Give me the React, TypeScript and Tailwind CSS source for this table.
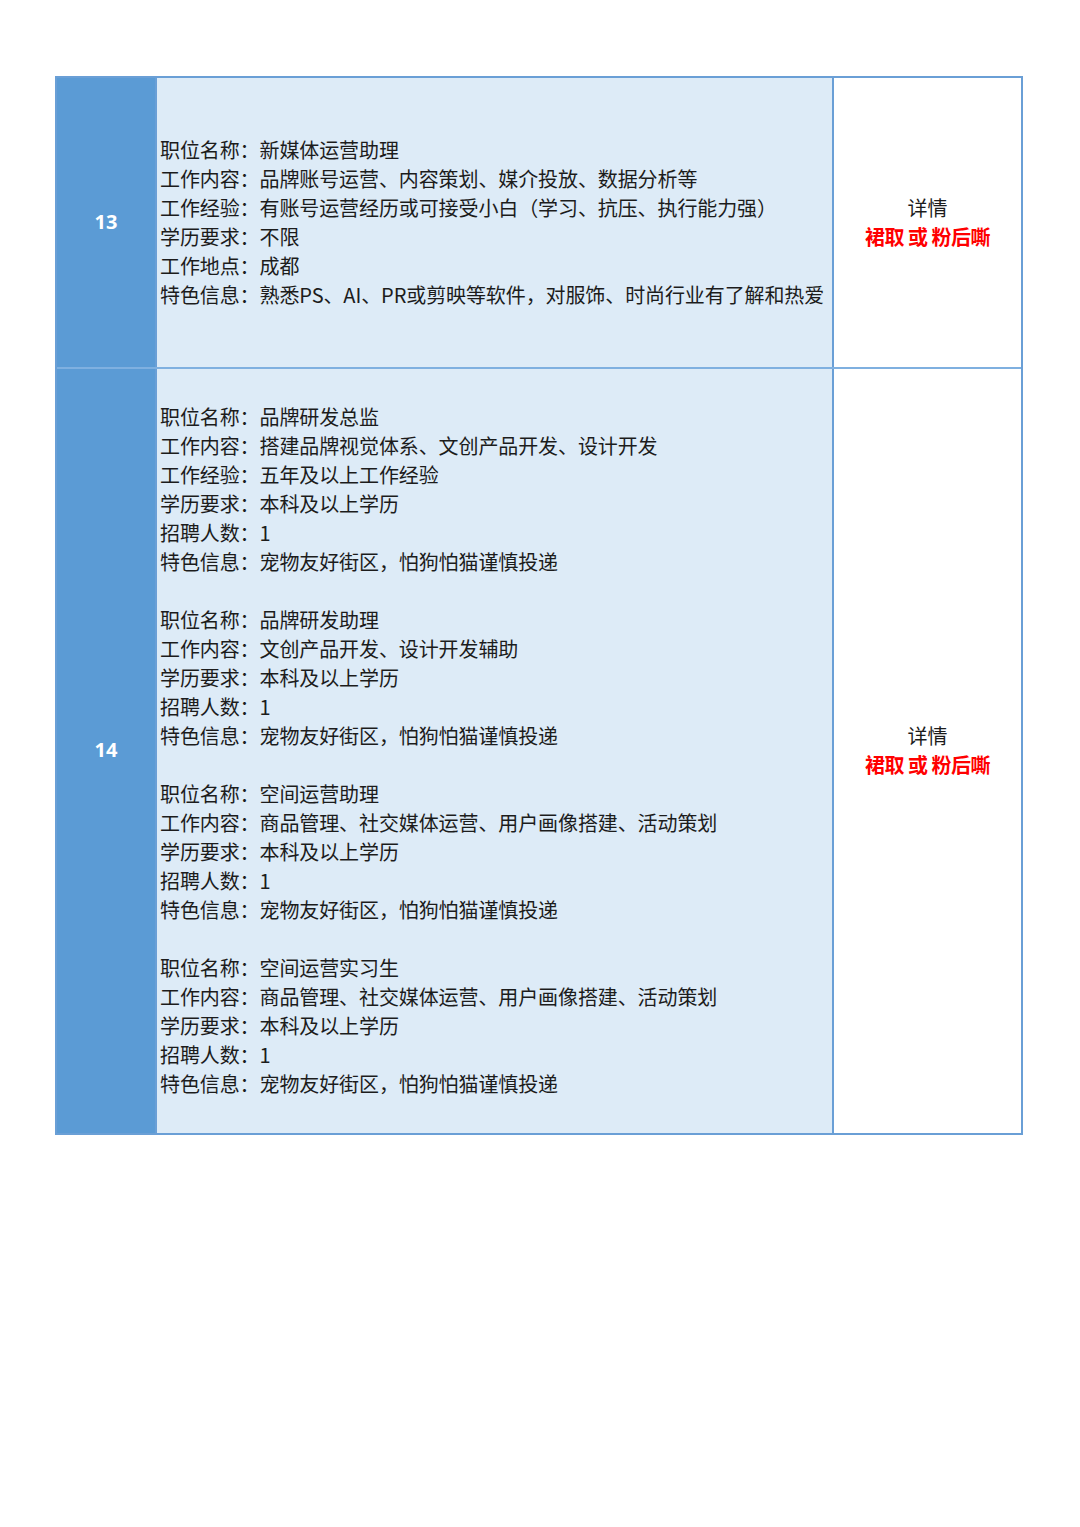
const rows = [
  {
    no: "13",
    blocks: [
      [
        "职位名称：新媒体运营助理",
        "工作内容：品牌账号运营、内容策划、媒介投放、数据分析等",
        "工作经验：有账号运营经历或可接受小白（学习、抗压、执行能力强）",
        "学历要求：不限",
        "工作地点：成都",
        "特色信息：熟悉PS、AI、PR或剪映等软件，对服饰、时尚行业有了解和热爱",
      ],
    ],
  },
  {
    no: "14",
    blocks: [
      [
        "职位名称：品牌研发总监",
        "工作内容：搭建品牌视觉体系、文创产品开发、设计开发",
        "工作经验：五年及以上工作经验",
        "学历要求：本科及以上学历",
        "招聘人数：1",
        "特色信息：宠物友好街区，怕狗怕猫谨慎投递",
      ],
      [
        "职位名称：品牌研发助理",
        "工作内容：文创产品开发、设计开发辅助",
        "学历要求：本科及以上学历",
        "招聘人数：1",
        "特色信息：宠物友好街区，怕狗怕猫谨慎投递",
      ],
      [
        "职位名称：空间运营助理",
        "工作内容：商品管理、社交媒体运营、用户画像搭建、活动策划",
        "学历要求：本科及以上学历",
        "招聘人数：1",
        "特色信息：宠物友好街区，怕狗怕猫谨慎投递",
      ],
      [
        "职位名称：空间运营实习生",
        "工作内容：商品管理、社交媒体运营、用户画像搭建、活动策划",
        "学历要求：本科及以上学历",
        "招聘人数：1",
        "特色信息：宠物友好街区，怕狗怕猫谨慎投递",
      ],
    ],
  },
];

const font = { fontFamily: '"Noto Sans CJK SC", "Noto Sans", sans-serif' };

export default function App() {
  return (
    <div className="w-[1080px] h-[1527px] bg-white pt-[76px] pl-[55px]" style={font}>
      <div className="w-[968px] border-2 border-[#6a9fd6]">
        {rows.map((row, i) => (
          <div
            key={row.no}
            className={`flex ${i > 0 ? "border-t-2 border-[#7fb0e0]" : ""}`}
          >
            <div className="w-[100px] shrink-0 bg-[#5b9bd5] flex items-center justify-center border-r-2 border-[#6a9fd6] pb-[2px]">
              <span
                className="text-white font-bold text-[20px]"
                style={{ fontFamily: '"Open Sans", "Liberation Sans", sans-serif' }}
              >
                {row.no}
              </span>
            </div>
            <div className="w-[677px] shrink-0 bg-[#ddebf7] border-r-2 border-[#6a9fd6] pl-[3px] flex flex-col justify-center gap-[29px] pt-[33px] pb-[35px] min-h-[289px]">
              {row.blocks.map((b, j) => (
                <div key={j} className="flex flex-col">
                  {b.map((line) => (
                    <div
                      key={line}
                      className="text-[20px] leading-[29px] text-[#1c1c1c] whitespace-nowrap tracking-[-0.1px]"
                    >
                      {line}
                    </div>
                  ))}
                </div>
              ))}
            </div>
            <div className="flex-1 flex flex-col items-center justify-center pb-[2px]">
              <div className="text-[20px] leading-[29px] text-[#1c1c1c]">详情</div>
              <div className="text-[20px] leading-[29px] font-bold text-[#ff0000] tracking-[-0.5px]">
                裙取 或 粉后嘶
              </div>
            </div>
          </div>
        ))}
      </div>
    </div>
  );
}
